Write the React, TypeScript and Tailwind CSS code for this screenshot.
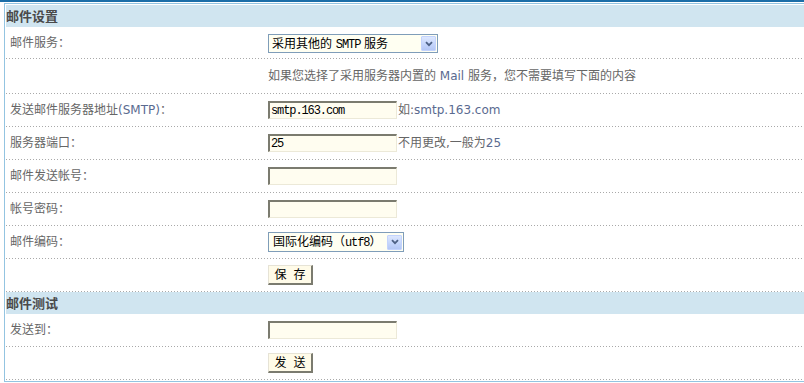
import React from "react";

const SEP =
  "h-px shrink-0 bg-[repeating-linear-gradient(90deg,#a9a9a9_0px,#a9a9a9_1px,transparent_1px,transparent_3px)]";

const LATIN = "text-[#5a6a90]";

function Row({
  h,
  label,
  children,
}: {
  h: string;
  label?: React.ReactNode;
  children?: React.ReactNode;
}) {
  return (
    <>
      <div className={`flex shrink-0 items-center ${h}`}>
        <div className="w-[262px] shrink-0 pl-1 text-[#666]">{label}</div>
        <div className="flex items-center">{children}</div>
      </div>
      <div className={SEP} />
    </>
  );
}

function Field({ value }: { value?: string }) {
  return (
    <div className="flex h-[18px] w-[129px] items-center border-t-2 border-l-2 border-b border-r border-t-[#7b7b6f] border-l-[#7b7b6f] border-b-[#ece9d8] border-r-[#ece9d8] bg-[#fffdf0] pl-px font-['Liberation_Mono',monospace] text-[12px] leading-none tracking-[-1.1px] text-black">
      {value}
    </div>
  );
}

function Arrow() {
  return (
    <div className="my-px mr-px flex h-[15px] w-[15px] items-center justify-center rounded-[1px] border border-[#c3d3fd] bg-[linear-gradient(180deg,#dde7fe_0%,#c3d4fb_60%,#b4c7f5_100%)]">
      <svg width="8" height="6" viewBox="0 0 8 6">
        <path d="M1 1.2 L4 4.2 L7 1.2" fill="none" stroke="#4d6185" strokeWidth="1.8" />
      </svg>
    </div>
  );
}

function Mono({ children }: { children: React.ReactNode }) {
  return (
    <span className="font-['Liberation_Mono',monospace] text-[12px] tracking-[-1.1px]">
      {children}
    </span>
  );
}

function Btn({ children }: { children: React.ReactNode }) {
  return (
    <button className="flex h-[20px] w-[45px] items-center justify-center border-t border-l border-b-2 border-r-2 border-t-[#e6e3d6] border-l-[#e6e3d6] border-b-[#7b7b6f] border-r-[#7b7b6f] bg-[#fffbe8] text-[12px] leading-none text-black [word-spacing:3px]">
      {children}
    </button>
  );
}

export default function App() {
  return (
    <div className="h-[383px] w-[804px] overflow-hidden bg-white font-['DejaVu_Sans','Noto_Sans_CJK_SC',sans-serif] text-[12px] leading-none">
      <div className="h-[2px] bg-[#1b6ea8]" />
      <div className="ml-1 mt-px flex flex-col border-t border-l border-b border-[#93c4e1] pl-px pt-px pb-px">
        <div className="flex h-[22px] shrink-0 items-center bg-[#d0e5f0] text-[13px] font-bold text-[#4a4a4a]">
          邮件设置
        </div>

        <Row h="h-[31px]" label="邮件服务：">
          <div className="mt-[2px] flex h-[19px] w-[170px] items-center justify-between border border-[#7f9db9] bg-[#fffff2] text-black">
            <span className="pl-[3px] pt-px">
              采用其他的 <Mono>SMTP</Mono> 服务
            </span>
            <Arrow />
          </div>
        </Row>

        <Row h="h-[34px]">
          <span className="text-[#666]">
            如果您选择了采用服务器内置的 <span className={LATIN}>Mail</span> 服务，您不需要填写下面的内容
          </span>
        </Row>

        <Row
          h="h-[32px]"
          label={
            <>
              发送邮件服务器地址<span className={LATIN}>(SMTP)</span>：
            </>
          }
        >
          <Field value="smtp.163.com" />
          <span className="pl-px text-[#666]">
            如:<span className={LATIN}>smtp.163.com</span>
          </span>
        </Row>

        <Row h="h-[32px]" label="服务器端口：">
          <Field value="25" />
          <span className="pl-px text-[#666]">
            不用更改,一般为<span className={LATIN}>25</span>
          </span>
        </Row>

        <Row h="h-[32px]" label="邮件发送帐号：">
          <Field />
        </Row>

        <Row h="h-[32px]" label="帐号密码：">
          <Field />
        </Row>

        <Row h="h-[32px]" label="邮件编码：">
          <div className="flex h-[20px] w-[136px] items-center justify-between border border-[#7f9db9] bg-[#fffff2] text-black">
            <span className="pl-[4px] pt-px">
              国际化编码（<Mono>utf8</Mono>）
            </span>
            <Arrow />
          </div>
        </Row>

        <Row h="h-[32px]">
          <Btn>保 存</Btn>
        </Row>

        <div className="flex h-[22px] shrink-0 items-center bg-[#d0e5f0] text-[13px] font-bold text-[#4a4a4a]">
          邮件测试
        </div>

        <Row h="h-[32px]" label="发送到：">
          <Field />
        </Row>

        <Row h="h-[32px]">
          <Btn>发 送</Btn>
        </Row>
      </div>
    </div>
  );
}
